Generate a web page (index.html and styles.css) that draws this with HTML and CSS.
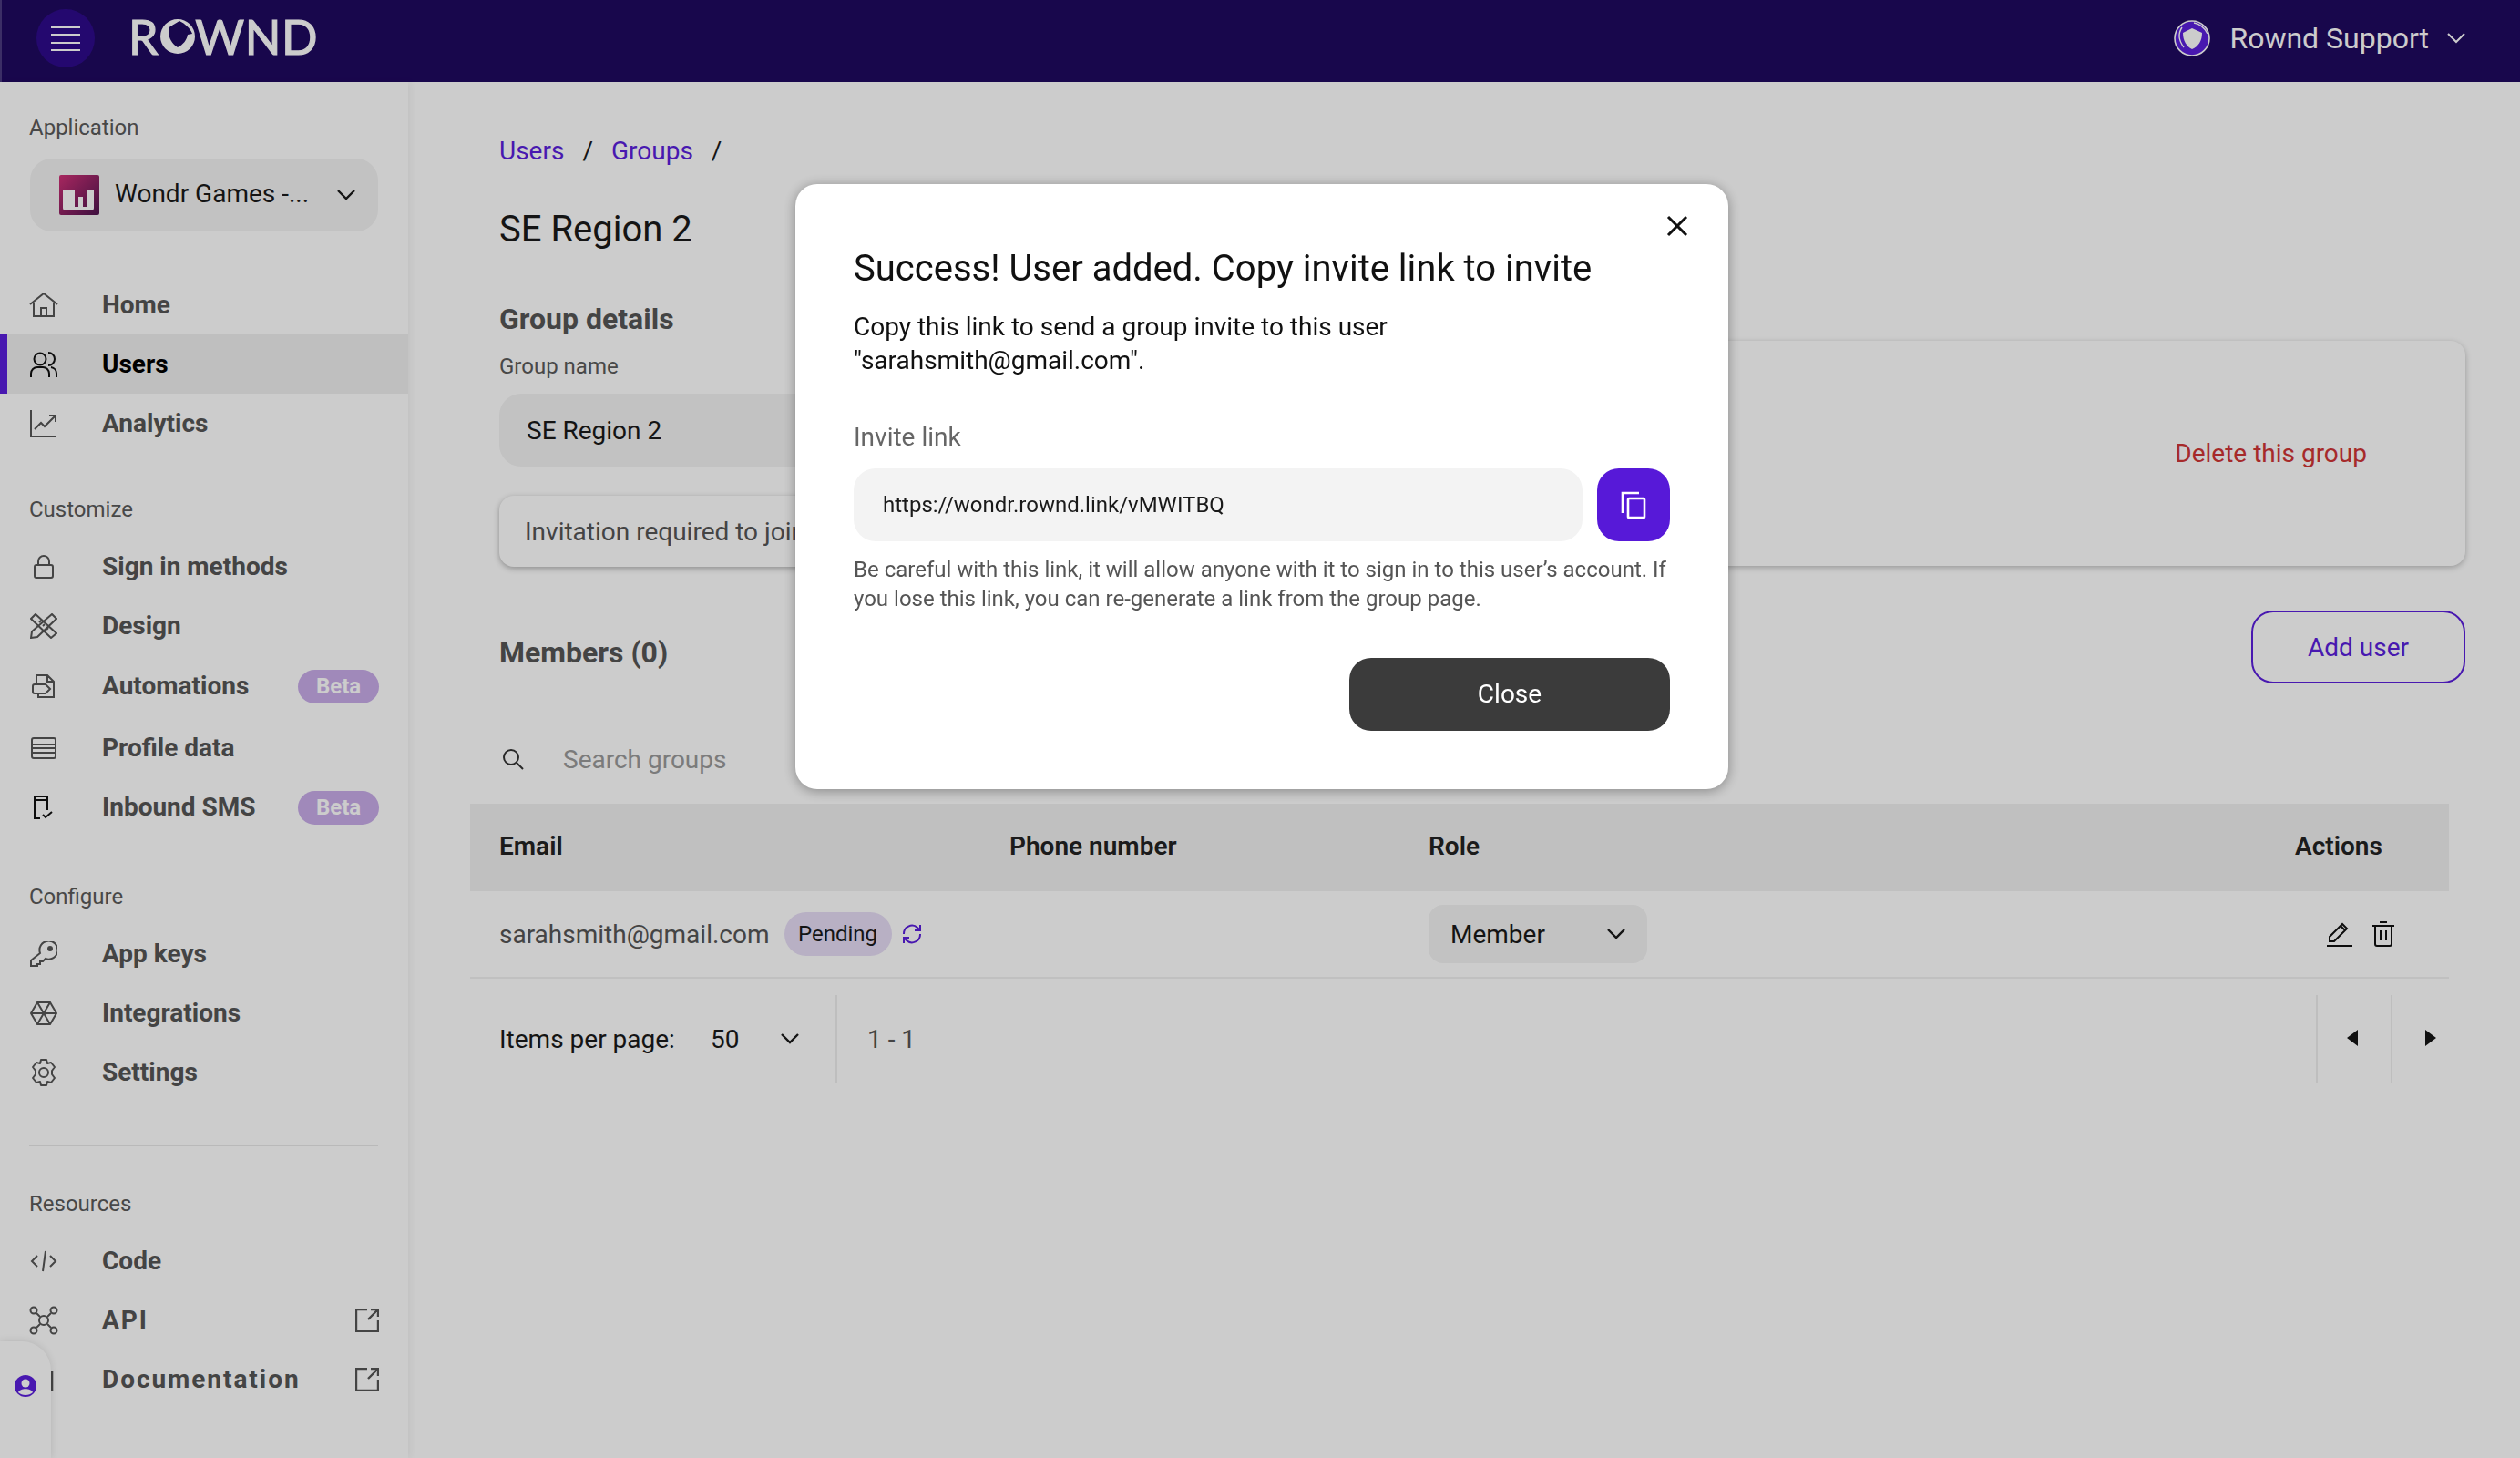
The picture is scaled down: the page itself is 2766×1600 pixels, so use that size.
FILE: index.html
```html
<!DOCTYPE html>
<html lang="en">
<head>
  <meta charset="UTF-8">
  <title>Rownd - SE Region 2</title>
  <link rel="stylesheet" href="styles.css">
</head>
<body>
  <!-- Top bar -->
  <header class="topbar">
    <div class="topbar-left">
      <button class="menu-button" aria-label="Menu">
        <svg width="32" height="28" viewBox="0 0 32 28" fill="none" stroke="#fff" stroke-width="2"><path d="M0 3h32M0 11h32M0 20h32M0 28h32" transform="translate(0 -1)"/></svg>
      </button>
      <div class="logo">R<svg class="logo-o" width="40" height="40" viewBox="0 0 40 40"><path fill="#fff" fill-rule="evenodd" d="M20 1a19 19 0 1 1 0 38a19 19 0 0 1 0-38zM22 3l-10 6c-2 1-2 3-2 5c0 8 4 14 10 18c6-3 10-8 11-14l5-1c-2-6-8-11-14-14z"/></svg>WND</div>
    </div>
    <div class="account">
      <svg width="40" height="40" viewBox="0 0 40 40"><circle cx="20" cy="20" r="19" fill="#5b1fdc" stroke="#fff" stroke-width="1.6"/><path fill="#fff" d="M20 9l11 5c0 9-4 15-11 18c-6-3-10-9-10-18z"/><path fill="none" stroke="#fff" stroke-width="1.4" d="M9 8c-4 6-4 14 2 22M22 3c6 1 11 4 15 12"/></svg>
      <span>Rownd Support</span>
      <svg class="chevron" width="20" height="12" viewBox="0 0 20 12"><path d="M1 1l9 9l9-9" fill="none" stroke="#fff" stroke-width="2"/></svg>
    </div>
  </header>

  <div class="layout">
    <!-- Sidebar -->
    <aside class="sidebar">
      <div class="side-label">Application</div>
      <div class="app-select">
        <svg width="44" height="44" viewBox="0 0 44 44">
          <defs><linearGradient id="app-grad" x1="0" y1="0" x2="1" y2="1"><stop offset="0" stop-color="#d23177"/><stop offset="1" stop-color="#4e1450"/></linearGradient></defs>
          <rect width="44" height="44" rx="2" fill="url(#app-grad)"/>
          <path fill="#fff" d="M4 17h13v18h4V24h5v11h4V17h8v19a3 3 0 0 1-3 3H7a3 3 0 0 1-3-3z"/>
        </svg>
        <span class="app-name">Wondr Games -...</span>
        <svg width="22" height="14" viewBox="0 0 22 14"><path d="M2 2l9 9l9-9" fill="none" stroke="#1a1a1a" stroke-width="2.4"/></svg>
      </div>

      <nav class="nav nav-main">
        <a class="nav-item">
          <span class="nav-icon"><svg width="32" height="28" viewBox="0 0 32 28" class="ico"><path d="M1 13L16 1l15 12M5 11v15h22V11M13 26v-9h6v9"/></svg></span>Home
        </a>
        <a class="nav-item active">
          <span class="nav-icon"><svg width="30" height="28" viewBox="0 0 30 28" class="ico"><circle cx="11" cy="8" r="6.5"/><path d="M1 28v-4a7 7 0 0 1 7-7h6a7 7 0 0 1 7 7v4M20 1a7 7 0 0 1 0 14M23 17a7 7 0 0 1 6 7v4"/></svg></span>Users
        </a>
        <a class="nav-item">
          <span class="nav-icon"><svg width="30" height="30" viewBox="0 0 30 30" class="ico"><path d="M1 0v29h28M5 21l7-7l4 4l11-11M21 6h7v7"/></svg></span>Analytics
        </a>
      </nav>

      <div class="side-label section">Customize</div>
      <nav class="nav">
        <a class="nav-item">
          <span class="nav-icon"><svg width="22" height="26" viewBox="0 0 22 26" class="ico"><rect x="1" y="11" width="20" height="14" rx="2"/><path d="M5 11V7a6 6 0 0 1 12 0v4"/></svg></span>Sign in methods
        </a>
        <a class="nav-item">
          <span class="nav-icon"><svg width="30" height="28" viewBox="0 0 30 28" class="ico"><path d="M6 1L1 6l22 21l6-5zM24 1l5 5L8 26l-7 1l1-7zM10 10l2-2M14 14l2-2M18 18l2-2"/></svg></span>Design
        </a>
        <a class="nav-item tall">
          <span class="nav-icon"><svg width="26" height="26" viewBox="0 0 26 26" class="ico"><path d="M5 9V1h12l7 7v17H7v-3M17 1v7h7M3 11h12l5 5l-5 5H3a2 2 0 0 1-2-2v-6a2 2 0 0 1 2-2z"/></svg></span>Automations
          <span class="beta">Beta</span>
        </a>
        <a class="nav-item">
          <span class="nav-icon"><svg width="28" height="24" viewBox="0 0 28 24" class="ico"><rect x="1" y="1" width="26" height="22" rx="2"/><path d="M1 8h26M1 12h26M1 17h26"/></svg></span>Profile data
        </a>
        <a class="nav-item">
          <span class="nav-icon"><svg width="22" height="26" viewBox="0 0 22 26" class="ico dark"><path d="M15 16V1H1v24h6M1 5h14M10 21l3 3l7-6"/></svg></span>Inbound SMS
          <span class="beta">Beta</span>
        </a>
      </nav>

      <div class="side-label section section-configure">Configure</div>
      <nav class="nav">
        <a class="nav-item">
          <span class="nav-icon"><svg width="30" height="28" viewBox="0 0 30 28" class="ico"><path d="M11 13a10 10 0 1 1 6 6l-3 3h-3v3H8v2H1v-6z"/><circle cx="22" cy="8" r="2" fill="#555"/></svg></span>App keys
        </a>
        <a class="nav-item">
          <span class="nav-icon"><svg width="30" height="26" viewBox="0 0 30 26" class="ico"><path d="M8 1h14l7 12l-7 12H8L1 13zM8 1l14 24M22 1L8 25M1 13h28"/></svg></span>Integrations
        </a>
        <a class="nav-item">
          <span class="nav-icon"><svg width="28" height="30" viewBox="0 0 28 30" class="ico"><circle cx="14" cy="15" r="5"/><path d="M11 1h6l1 4l4-1l4 5l-3 4l0 4l3 4l-4 5l-4-1l-1 4h-6l-1-4l-4 1l-4-5l3-4l0-4l-3-4l4-5l4 1z" stroke-linejoin="round"/></svg></span>Settings
        </a>
      </nav>

      <div class="side-divider"></div>

      <div class="side-label">Resources</div>
      <nav class="nav">
        <a class="nav-item">
          <span class="nav-icon"><svg width="30" height="24" viewBox="0 0 30 24" class="ico"><path d="M8 6l-6 6l6 6M22 6l6 6l-6 6M17 1l-3 22"/></svg></span>Code
        </a>
        <a class="nav-item wide">
          <span class="nav-icon"><svg width="32" height="32" viewBox="0 0 32 32" class="ico"><circle cx="16" cy="16" r="5"/><circle cx="5" cy="5" r="3.5"/><circle cx="27" cy="5" r="3.5"/><circle cx="5" cy="27" r="3.5"/><circle cx="27" cy="27" r="3.5"/><path d="M8 8l4 4M24 8l-4 4M8 24l4-4M24 24l-4-4"/></svg></span>API
          <svg class="ext" width="26" height="26" viewBox="0 0 26 26"><path d="M13 1H1v24h24V13M14 12L25 1M17 1h8v8" class="ico-path"/></svg>
        </a>
        <a class="nav-item wide">
          <span class="nav-icon"><svg width="28" height="26" viewBox="0 0 28 26" class="ico doc"><path d="M3 5h20v21H3z"/></svg></span>Documentation
          <svg class="ext" width="26" height="26" viewBox="0 0 26 26"><path d="M13 1H1v24h24V13M14 12L25 1M17 1h8v8" class="ico-path"/></svg>
        </a>
      </nav>
    </aside>

    <!-- Main content -->
    <main class="content">
      <div class="breadcrumb"><a>Users</a><span>/</span><a>Groups</a><span>/</span></div>
      <h1>SE Region 2</h1>
      <h2>Group details</h2>

      <div class="details">
        <div class="details-left">
          <div class="field-label">Group name</div>
          <div class="name-input">SE Region 2</div>
          <div class="invite-toggle">Invitation required to join this group</div>
        </div>
        <div class="danger-card">
          <a class="delete-link">Delete this group</a>
        </div>
      </div>

      <div class="members-row">
        <h2>Members (0)</h2>
        <button class="add-user">Add user</button>
      </div>

      <div class="search">
        <svg width="26" height="26" viewBox="0 0 26 26" fill="none" stroke="#333" stroke-width="2"><circle cx="11" cy="11" r="8"/><path d="M17 17l7 7"/></svg>
        <span>Search groups</span>
      </div>

      <table class="members">
        <thead>
          <tr><th class="col-email">Email</th><th class="col-phone">Phone number</th><th class="col-role">Role</th><th>Actions</th></tr>
        </thead>
        <tbody>
          <tr>
            <td>
              <div class="email-cell">
                sarahsmith@gmail.com
                <span class="pending">Pending</span>
                <svg width="24" height="24" viewBox="0 0 24 24" fill="none" stroke="#5b1fdc" stroke-width="2"><path d="M3 12a9 9 0 0 1 15-7l3 3M21 12a9 9 0 0 1-15 7l-3-3M21 2v6h-6M3 22v-6h6"/></svg>
              </div>
            </td>
            <td></td>
            <td>
              <div class="role-select">Member
                <svg width="22" height="14" viewBox="0 0 22 14"><path d="M2 2l9 9l9-9" fill="none" stroke="#1a1a1a" stroke-width="2.4"/></svg>
              </div>
            </td>
            <td>
              <div class="actions">
                <svg width="28" height="28" viewBox="0 0 28 28" fill="none" stroke="#111" stroke-width="2"><path d="M3 23v-6L17 3l5 5L8 22H3M15 5l5 5"/><path d="M0 27h28"/></svg>
                <svg width="24" height="28" viewBox="0 0 24 28" fill="none" stroke="#111" stroke-width="2"><path d="M8 1h8M0 5h24M3 5v20a2 2 0 0 0 2 2h14a2 2 0 0 0 2-2V5M9 10v11M15 10v11"/></svg>
              </div>
            </td>
          </tr>
        </tbody>
      </table>

      <div class="pager">
        <div class="per-page">
          <span>Items per page:</span><span class="per-value">50</span>
          <svg width="22" height="14" viewBox="0 0 22 14"><path d="M2 2l9 9l9-9" fill="none" stroke="#1a1a1a" stroke-width="2.4"/></svg>
        </div>
        <div class="range">1 - 1</div>
        <button class="page-btn"><svg width="12" height="18" viewBox="0 0 12 18"><path d="M12 0v18L0 9z" fill="#151515"/></svg></button>
        <button class="page-btn next"><svg width="12" height="18" viewBox="0 0 12 18"><path d="M0 0v18l12-9z" fill="#151515"/></svg></button>
      </div>
    </main>
  </div>

  <!-- Floating account widget -->
  <div class="widget">
    <svg width="24" height="24" viewBox="0 0 24 24"><circle cx="12" cy="12" r="12" fill="#5b1fdc"/><circle cx="12" cy="9" r="4.5" fill="#fff"/><path d="M4 19c2-5 14-5 16 0c-4 4-12 4-16 0z" fill="#fff"/></svg>
  </div>

  <!-- Dim layer and dialog -->
  <div class="overlay">
    <div class="modal">
      <button class="modal-close" aria-label="Close">
        <svg width="24" height="24" viewBox="0 0 24 24"><path d="M2 2l20 20M22 2L2 22" stroke="#111" stroke-width="3"/></svg>
      </button>
      <h3>Success! User added. Copy invite link to invite</h3>
      <p class="modal-text">Copy this link to send a group invite to this user<br>"sarahsmith@gmail.com".</p>
      <div class="modal-label">Invite link</div>
      <div class="link-row">
        <div class="link-box">https://wondr.rownd.link/vMWITBQ</div>
        <button class="copy-button" aria-label="Copy">
          <svg width="28" height="30" viewBox="0 0 28 30" fill="none" stroke="#fff" stroke-width="2.6"><path d="M2 24V2h18"/><rect x="8" y="8" width="18" height="21" rx="1"/></svg>
        </button>
      </div>
      <p class="modal-help">Be careful with this link, it will allow anyone with it to sign in to this user’s account. If you lose this link, you can re-generate a link from the group page.</p>
      <div class="modal-footer"><button class="close-button">Close</button></div>
    </div>
  </div>
</body>
</html>
```

FILE: styles.css
```css
* {
  box-sizing: border-box;
}

html, body {
  margin: 0;
  height: 100%;
}

body {
  background-color: #fff;
  color: #1a1a1a;
  font-family: Roboto, Arial, sans-serif;
  font-size: 28px;
  overflow: hidden;
}

button {
  font-family: inherit;
  border: none;
  background: none;
  padding: 0;
}

/* Top bar */
.topbar {
  height: 90px;
  background-color: #1f0960;
  border-left: 2px solid #4a3a80;
  display: flex;
  justify-content: space-between;
  align-items: center;
  padding: 0 60px 6px 38px;
}

.topbar-left {
  display: flex;
  align-items: center;
  gap: 37px;
}

.menu-button {
  width: 64px;
  height: 64px;
  border-radius: 50%;
  background-color: #2e0b8b;
  display: flex;
  align-items: center;
  justify-content: center;
}

.logo {
  display: flex;
  align-items: center;
  padding-bottom: 4px;
  color: #fff;
  font-family: Lato, Arial, sans-serif;
  font-size: 52px;
  font-weight: 400;
  line-height: 1;
  letter-spacing: 0.6px;
  -webkit-text-stroke: 1.2px #fff;
}

.logo-o {
  margin: 0 -1px 0 1px;
}

.account {
  display: flex;
  align-items: center;
  color: #fff;
  font-size: 32px;
}

.account span {
  margin: 0 20px 0 21px;
}

/* Page layout */
.layout {
  display: flex;
  height: 1510px;
}

.sidebar {
  width: 448px;
  flex-shrink: 0;
  padding: 34px 33px 0 0;
  background-color: #fff;
  box-shadow: 2px 0 8px rgba(0, 0, 0, 0.06);
  position: relative;
}

.side-label {
  font-size: 24px;
  line-height: 32px;
  color: #5a5a5a;
  padding-left: 32px;
}

.side-label.section {
  margin-top: 46px;
}

.side-label.section-configure {
  margin-top: 50px;
}

.app-select {
  margin: 18px 0 0 33px;
  height: 80px;
  border-radius: 24px;
  background-color: #f3f3f3;
  display: flex;
  align-items: center;
  padding: 0 24px 0 32px;
}

.app-name {
  flex: 1;
  margin-left: 17px;
  padding-bottom: 3px;
  white-space: nowrap;
}

.nav {
  margin-top: 14px;
}

.nav-main {
  margin-top: 48px;
}

.nav-item {
  height: 65px;
  display: flex;
  align-items: center;
  padding-left: 32px;
  margin-right: -33px;
  font-weight: 700;
  color: #555;
}

.nav-item.tall {
  height: 69px;
  padding-bottom: 2px;
}

.nav-item.wide {
  letter-spacing: 1.95px;
}

.nav-item.active {
  background-color: #efefef;
  box-shadow: inset 8px 0 0 #5b1fdc;
  color: #000;
}

.nav-icon {
  width: 32px;
  margin-right: 48px;
  display: flex;
  justify-content: center;
  flex-shrink: 0;
}

.ico {
  fill: none;
  stroke: #555;
  stroke-width: 2;
}

.nav-item.active .ico, .ico.dark {
  stroke: #111;
}

.ico.doc {
  stroke-width: 2.6;
}

.ico-path {
  fill: none;
  stroke: #555;
  stroke-width: 2.4;
}

.beta {
  margin: 2px 32px 0 auto;
  width: 89px;
  height: 37px;
  border-radius: 19px;
  background-color: #c8ace9;
  color: #fff;
  font-size: 24px;
  font-weight: 700;
  letter-spacing: 0;
  line-height: 37px;
  text-align: center;
}

.ext {
  margin-left: auto;
  margin-right: 32px;
}

.side-divider {
  margin: 47px 0 47px 32px;
  border-top: 2px solid #e8e8e8;
}

/* Main content */
.content {
  flex: 1;
  padding: 60px 60px 0 100px;
  background-color: #fff;
}

.breadcrumb {
  display: flex;
  gap: 20px;
  line-height: 32px;
}

.breadcrumb a {
  color: #5b1fdc;
}

h1 {
  margin: 46px 0 0;
  font-size: 40px;
  line-height: 48px;
  font-weight: 400;
}

h2 {
  margin: 54px 0 0;
  font-size: 32px;
  line-height: 40px;
  font-weight: 700;
  color: #555;
}

.details {
  display: grid;
  grid-template-columns: 600px 1fr;
  margin-top: 4px;
}

.details-left {
  padding-top: 12px;
}

.field-label {
  font-size: 24px;
  line-height: 32px;
  color: #5a5a5a;
}

.name-input {
  margin-top: 14px;
  height: 80px;
  border-radius: 24px;
  background-color: #f3f3f3;
  display: flex;
  align-items: center;
  padding-left: 30px;
}

.invite-toggle {
  margin-top: 32px;
  height: 78px;
  border-radius: 16px;
  box-shadow: 0 2px 6px rgba(0, 0, 0, 0.3);
  display: flex;
  align-items: center;
  padding-left: 28px;
  color: #555;
  white-space: nowrap;
}

.danger-card {
  height: 247px;
  border-radius: 16px;
  box-shadow: 0 2px 6px rgba(0, 0, 0, 0.25);
  display: flex;
  align-items: center;
  justify-content: flex-end;
  padding-right: 108px;
}

.delete-link {
  color: #d03535;
}

.members-row {
  margin-top: 48px;
  display: flex;
  justify-content: space-between;
}

.members-row h2 {
  margin: 26px 0 0;
}

.add-user {
  width: 235px;
  height: 80px;
  border: 2px solid #5b1fdc;
  border-radius: 24px;
  color: #5b1fdc;
  font-size: 28px;
}

.search {
  margin-top: 59px;
  height: 48px;
  display: flex;
  align-items: center;
  color: #9a9a9a;
}

.search svg {
  margin-left: 2px;
  margin-right: 42px;
}

/* Members table */
.members {
  width: 2172px;
  margin: 25px 0 0 -32px;
  border-collapse: collapse;
  table-layout: fixed;
}

.members th {
  height: 96px;
  background-color: #f1f1f1;
  text-align: left;
  padding: 0 0 3px 32px;
  font-weight: 600;
  color: #222;
}

.col-email {
  width: 560px;
}

.col-phone {
  width: 460px;
}

.col-role {
  width: 951px;
}

.members td {
  height: 95px;
  padding: 0 0 0 32px;
  border-bottom: 2px solid #f0f0f0;
  color: #555;
}

.email-cell {
  display: flex;
  align-items: center;
  white-space: nowrap;
}

.pending {
  margin: 0 10px 0 16px;
  height: 48px;
  width: 118px;
  border-radius: 24px;
  background-color: #e6dcf6;
  color: #1a1a1a;
  font-size: 24px;
  line-height: 48px;
  text-align: center;
}

.role-select {
  width: 240px;
  height: 64px;
  border-radius: 16px;
  background-color: #f3f3f3;
  color: #1a1a1a;
  display: flex;
  align-items: center;
  justify-content: space-between;
  padding: 0 23px 0 24px;
}

.actions {
  display: flex;
  align-items: center;
  gap: 22px;
  padding-left: 35px;
}

/* Pagination */
.pager {
  margin-top: 18px;
  height: 96px;
  display: flex;
  align-items: center;
}

.per-page {
  width: 371px;
  height: 100%;
  display: flex;
  align-items: center;
  border-right: 2px solid #eee;
}

.per-value {
  margin: 0 45px 0 39px;
}

.range {
  flex: 1;
  padding-left: 33px;
  color: #555;
}

.page-btn {
  width: 82px;
  height: 100%;
  padding-right: 4px;
  border-left: 2px solid #eee;
}

.page-btn.next {
  padding: 0 0 0 4px;
}

/* Floating widget */
.widget {
  position: fixed;
  left: 0;
  bottom: 0;
  width: 56px;
  height: 128px;
  background-color: #fff;
  border-top-right-radius: 32px;
  box-shadow: 0 0 8px rgba(0, 0, 0, 0.12);
  padding: 35px 0 0 16px;
}

/* Dialog */
.overlay {
  position: fixed;
  inset: 0;
  background-color: rgba(0, 0, 0, 0.2);
  display: flex;
  justify-content: center;
  align-items: flex-start;
  padding: 202px 0 0 4px;
}

.modal {
  position: relative;
  width: 1024px;
  height: 664px;
  background-color: #fff;
  border-radius: 24px;
  box-shadow: 0 2px 14px rgba(0, 0, 0, 0.35);
  padding: 67px 64px 0;
}

.modal-close {
  position: absolute;
  top: 34px;
  right: 44px;
  line-height: 0;
}

.modal h3 {
  margin: 0;
  font-size: 40px;
  line-height: 52px;
  font-weight: 400;
  color: #111;
}

.modal-text {
  margin: 19px 0 0;
  line-height: 37px;
  color: #111;
}

.modal-label {
  margin-top: 47px;
  line-height: 37px;
  color: #666;
}

.link-row {
  display: flex;
  gap: 16px;
  margin-top: 16px;
}

.link-box {
  flex: 1;
  height: 80px;
  border-radius: 24px;
  background-color: #f3f3f3;
  display: flex;
  align-items: center;
  padding-left: 32px;
  font-size: 24px;
}

.copy-button {
  width: 80px;
  height: 80px;
  border-radius: 24px;
  background-color: #5719d8;
  display: flex;
  align-items: center;
  justify-content: center;
}

.modal-help {
  margin: 15px 0 0;
  font-size: 24px;
  line-height: 32px;
  color: #555;
}

.modal-footer {
  display: flex;
  justify-content: flex-end;
  margin-top: 49px;
}

.close-button {
  width: 352px;
  height: 80px;
  padding-bottom: 2px;
  border-radius: 24px;
  background-color: #3b3b3b;
  color: #fff;
  font-size: 28px;
}
```
